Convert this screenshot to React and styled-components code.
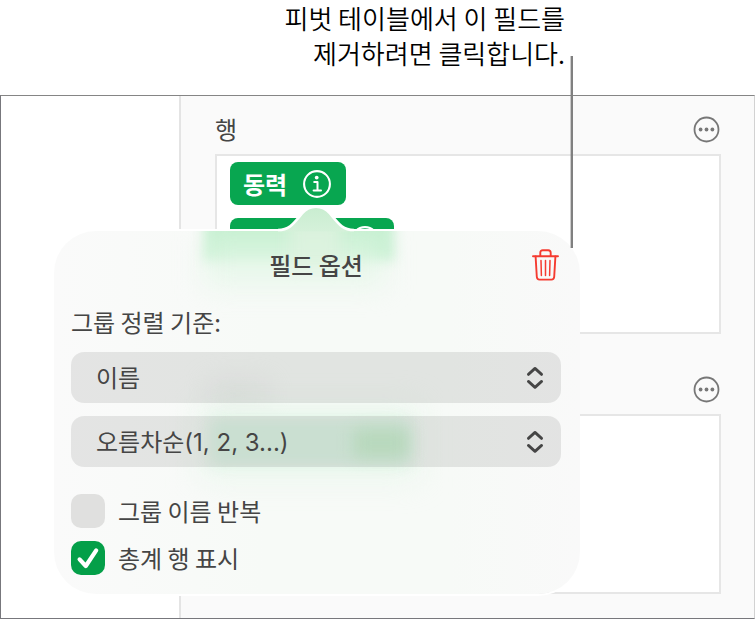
import React from "react";
import styled, { createGlobalStyle } from "styled-components";

const GlobalStyle = createGlobalStyle`
  *, *::before, *::after { box-sizing: border-box; }
  body {
    margin: 0;
    background: #fff;
    color: #454545;
    font-family: "Noto Sans CJK KR", sans-serif;
    font-size: 24px;
    line-height: 36px;
  }
  button, select, input { font: inherit; color: inherit; margin: 0; }
  svg { display: block; }
`;

const Figure = styled.main`
  position: relative;
`;

const Caption = styled.p`
  margin: 0;
  width: 565px;
  height: 95px;
  color: #000;
  font-size: 26px;
  font-weight: 350;
  line-height: 35px;
  text-align: right;
`;

const Leader = styled.div`
  position: absolute;
  z-index: 3;
  left: 571px;
  top: 56px;
  width: 2px;
  height: 192px;
  background: #808080;
  box-shadow: -1px 0 0 rgba(128, 128, 128, 0.4);
`;

const Frame = styled.div`
  position: relative;
  display: flex;
  border: 1px solid #77777c;
  border-top-color: #858585;
  border-right-color: #d2d2d2;
`;

const Canvas = styled.div`
  flex: none;
  width: 178px;
`;

const Panel = styled.aside`
  flex: 1;
  display: flex;
  flex-direction: column;
  gap: 30px;
  padding: 8px 33px 24px 34px;
  border-left: 2px solid #e4e4e4;
  background: #fafafa;
`;

const SectionHead = styled.header`
  display: flex;
  align-items: center;
  justify-content: space-between;
  height: 50px;
  padding-right: 1px;
`;

const SectionName = styled.h2`
  margin: 0;
  font-size: 24px;
  font-weight: 400;
  line-height: 34px;
`;

const IconButton = styled.button`
  display: block;
  margin-left: auto;
  padding: ${(p) => p.$pad || "0"};
  border: 0;
  background: none;
  color: ${(p) => p.$color || "#777"};
`;

const DropArea = styled.div`
  display: flex;
  flex-direction: column;
  align-items: flex-start;
  gap: 13px;
  height: 180px;
  padding: 6px 13px;
  border: 2px solid #e6e6e6;
  background: #fff;
`;

const Chip = styled.div`
  display: flex;
  align-items: center;
  justify-content: space-between;
  width: ${(p) => p.$width};
  height: 43px;
  padding: 0 14px 0 13px;
  border-radius: 8px;
  background: #08a650;
  color: #fff;
  font-weight: 600;
  line-height: 34px;
`;

const Popover = styled.section`
  position: absolute;
  z-index: 1;
  left: 53px;
  top: 135px;
  width: 526px;
  padding: 14px 19px 19px 17px;
  border-radius: 42px;
  background: linear-gradient(90deg, #fafafa, #f7faf7 40%, #f7faf7 75%, #f9f9f9);
  box-shadow: 0 -2px 0 #fff, 0 2px 0 #fff;
`;

const Tip = styled.svg`
  position: absolute;
  left: 222px;
  top: -26px;
`;

const Glow = styled.div`
  position: absolute;
  inset: 0;
  overflow: hidden;
  border-radius: 42px;
`;

const Haze = styled.div`
  position: absolute;
  left: ${(p) => p.$x};
  top: ${(p) => p.$y};
  width: ${(p) => p.$w};
  height: ${(p) => p.$h};
  background: ${(p) => p.$color};
  filter: blur(${(p) => p.$blur});
`;

const Content = styled.div`
  position: relative;
`;

const TitleRow = styled.header`
  display: grid;
  grid-template-columns: 1fr auto 1fr;
  align-items: center;
  height: 40px;
`;

const Title = styled.h1`
  grid-column: 2;
  margin: 0;
  font-size: 24px;
  font-weight: 500;
`;

const SortLabel = styled.label`
  display: block;
  margin: 19px 0 12px;
`;

const SelectList = styled.div`
  display: grid;
  gap: 13px;
`;

const SelectBox = styled.div`
  display: grid;
  grid-template-columns: 1fr auto;
  align-items: center;
  height: 51px;
  padding-right: 17px;
  border-radius: 13px;
  background: rgba(0, 0, 0, 0.085);
`;

const Select = styled.select`
  grid-area: 1 / 1 / 2 / 3;
  width: 100%;
  height: 51px;
  padding: 2px 40px 0 25px;
  border: 0;
  background: none;
  &[id] {
    font-family: Inter, "Noto Sans CJK KR", sans-serif;
    font-variation-settings: "opsz" 14;
  }
  appearance: none;
`;

const SelectArrows = styled.svg`
  grid-area: 1 / 2;
  pointer-events: none;
`;

const CheckList = styled.div`
  display: grid;
  gap: 13px;
  margin-top: 27px;
`;

const CheckRow = styled.label`
  display: flex;
  align-items: center;
  gap: 13px;
  height: 34px;
`;

const CheckStack = styled.span`
  display: grid;
  place-items: center;
  & > * { grid-area: 1 / 1; }
`;

const CheckInput = styled.input`
  width: 34px;
  height: 34px;
  border-radius: 10px;
  background: #e0e0df;
  appearance: none;
  &:checked { background: #049f49; }
  & + svg { visibility: hidden; pointer-events: none; }
  &:checked + svg { visibility: visible; }
`;

const MoreIcon = () => (
  <svg width="27" height="27" viewBox="0 0 27 27" fill="none">
    <circle cx="13.5" cy="13.5" r="12" stroke="currentColor" strokeWidth="1.8" />
    <g fill="currentColor">
      <circle cx="7.6" cy="13.5" r="1.9" />
      <circle cx="13.5" cy="13.5" r="1.9" />
      <circle cx="19.4" cy="13.5" r="1.9" />
    </g>
  </svg>
);

const InfoIcon = () => (
  <svg width="30" height="30" viewBox="0 0 30 30" fill="none" stroke="currentColor">
    <circle cx="15" cy="15" r="12.9" strokeWidth="2.1" />
    <circle cx="14.7" cy="8.6" r="1.9" fill="currentColor" stroke="none" />
    <path d="M12.2 13h3.3v8.4M11.6 21.5h7.4" strokeWidth="2" strokeLinecap="round" strokeLinejoin="round" />
  </svg>
);

const TrashIcon = () => (
  <svg width="27" height="32" viewBox="0 0 27 32" fill="none" stroke="currentColor" strokeWidth="1.9" strokeLinecap="round" strokeLinejoin="round">
    <path d="M1 7.3h25M8.3 7V3.8c0-1.6.9-2.6 2.5-2.6h5.4c1.6 0 2.5 1 2.5 2.6V7" />
    <path d="M3.6 7.5l1.2 20.3c.1 1.8 1.1 2.8 2.8 2.8h11.8c1.7 0 2.7-1 2.8-2.8L23.4 7.5" />
    <path d="M9 11.6l.4 14.8M13.5 11.6v14.8M18 11.6l-.4 14.8" strokeWidth="1.5" />
  </svg>
);

const Arrows = () => (
  <SelectArrows width="18" height="24" viewBox="0 0 18 24" fill="none" stroke="#454545" strokeWidth="2.8" strokeLinecap="round" strokeLinejoin="round">
    <path d="M2.4 8.4L9 2.4l6.6 6M2.4 15.4l6.6 6 6.6-6" />
  </SelectArrows>
);

const CheckMark = () => (
  <svg width="34" height="34" viewBox="0 0 34 34" fill="none" stroke="#fff" strokeWidth="4.2" strokeLinecap="round" strokeLinejoin="round">
    <path d="M8.6 18.4l6.2 6.6L25.2 9.4" />
  </svg>
);

function PanelSection({ name, children }) {
  return (
    <section>
      <SectionHead>
        {name && <SectionName>{name}</SectionName>}
        <IconButton type="button">
          <MoreIcon />
        </IconButton>
      </SectionHead>
      <DropArea>{children}</DropArea>
    </section>
  );
}

function Dropdown({ id, value }) {
  return (
    <SelectBox>
      <Select id={id} aria-labelledby="sort-label" defaultValue={value}>
        <option>{value}</option>
      </Select>
      <Arrows />
    </SelectBox>
  );
}

function Check({ label, checked }) {
  return (
    <CheckRow>
      <CheckStack>
        <CheckInput type="checkbox" defaultChecked={checked} />
        <CheckMark />
      </CheckStack>
      {label}
    </CheckRow>
  );
}

function FieldOptions() {
  return (
    <Popover aria-labelledby="options-title">
      <Glow>
        <Haze $x="150px" $y="-12px" $w="190px" $h="42px" $color="#c6f0d1" $blur="6px" />
        <Haze $x="150px" $y="10px" $w="180px" $h="44px" $color="rgba(225, 247, 230, 0.7)" $blur="14px" />
        <Haze $x="236px" $y="-14px" $w="50px" $h="50px" $color="rgba(222, 243, 224, 0.8)" $blur="8px" />
        <Haze $x="156px" $y="155px" $w="56px" $h="14px" $color="rgba(222, 229, 224, 0.8)" $blur="14px" />
        <Haze $x="145px" $y="176px" $w="220px" $h="70px" $color="rgba(226, 247, 232, 0.6)" $blur="16px" />
        <Haze $x="156px" $y="188px" $w="200px" $h="46px" $color="rgba(220, 243, 227, 0.9)" $blur="7px" />
        <Haze $x="300px" $y="198px" $w="54px" $h="28px" $color="#c9edce" $blur="8px" />
      </Glow>
      <Tip width="80" height="30" viewBox="0 0 80 30">
        <defs>
          <linearGradient id="tip-fill" x1="0" x2="0" y1="0" y2="1">
            <stop offset="0" stopColor="#c9edd0" />
            <stop offset="1" stopColor="#d5f1da" />
          </linearGradient>
        </defs>
        <path d="M2 25C14 25 18 18 26 8.5c8-9 20-9 28 0C62 18 66 25 78 25v1.5H2z" fill="url(#tip-fill)" />
        <path d="M2 25C14 25 18 18 26 8.5c8-9 20-9 28 0C62 18 66 25 78 25" fill="none" stroke="#fff" strokeWidth="2.6" />
      </Tip>
      <Content>
        <TitleRow>
          <Title id="options-title">필드 옵션</Title>
          <IconButton type="button" aria-label="필드 제거" $color="#f53b30" $pad="0 2px 0 0">
            <TrashIcon />
          </IconButton>
        </TitleRow>
        <SortLabel id="sort-label" htmlFor="sort-field">그룹 정렬 기준:</SortLabel>
        <SelectList>
          <Dropdown id="sort-field" value="이름" />
          <Dropdown id="sort-order" value="오름차순(1, 2, 3...)" />
        </SelectList>
        <CheckList>
          <Check label="그룹 이름 반복" />
          <Check label="총계 행 표시" checked />
        </CheckList>
      </Content>
    </Popover>
  );
}

export default function App() {
  return (
    <Figure>
      <GlobalStyle />
      <Caption>
        피벗 테이블에서 이 필드를
        <br />
        제거하려면 클릭합니다.
      </Caption>
      <Leader />
      <Frame>
        <Canvas />
        <Panel>
          <PanelSection name="행">
            <Chip $width="116px">
              동력
              <IconButton type="button" $color="#fff">
                <InfoIcon />
              </IconButton>
            </Chip>
            <Chip $width="164px">
              <IconButton type="button" $color="#fff">
                <InfoIcon />
              </IconButton>
            </Chip>
          </PanelSection>
          <PanelSection />
        </Panel>
        <FieldOptions />
      </Frame>
    </Figure>
  );
}
